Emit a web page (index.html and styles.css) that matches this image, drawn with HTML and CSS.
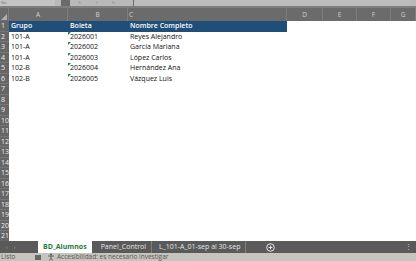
FILE: index.html
```html
<!DOCTYPE html>
<html lang="es">
<head>
    <meta charset="UTF-8">
    <meta name="viewport" content="width=device-width, initial-scale=1.0">
    <title>BD_Alumnos</title>
    <link rel="stylesheet" href="styles.css">
</head>
<body>
    <div class="formula-bar">
        <div class="name-box">Gü</div>
        <div class="fb-sep"></div>
        <div class="fb-icons"><span>✕</span><span>✓</span><span>fx</span></div>
        <div class="fb-input"></div>
    </div>

    <div class="sheet" id="sheet">
        <div class="row col-head">
            <div class="corner"></div>
            <div>A</div><div>B</div><div class="left">C</div><div>D</div><div>E</div><div>F</div><div>G</div>
        </div>
        <div class="row">
            <div class="rh">1</div>
            <div class="th">Grupo</div><div class="th">Boleta</div><div class="th">Nombre Completo</div>
            <div></div><div></div><div></div><div></div>
        </div>
        <div class="row">
            <div class="rh">2</div>
            <div>101-A</div><div class="txt">2026001</div><div>Reyes Alejandro</div>
            <div></div><div></div><div></div><div></div>
        </div>
        <div class="row">
            <div class="rh">3</div>
            <div>101-A</div><div class="txt">2026002</div><div>García Mariana</div>
            <div></div><div></div><div></div><div></div>
        </div>
        <div class="row">
            <div class="rh">4</div>
            <div>101-A</div><div class="txt">2026003</div><div>López Carlos</div>
            <div></div><div></div><div></div><div></div>
        </div>
        <div class="row">
            <div class="rh">5</div>
            <div>102-B</div><div class="txt">2026004</div><div>Hernández Ana</div>
            <div></div><div></div><div></div><div></div>
        </div>
        <div class="row">
            <div class="rh">6</div>
            <div>102-B</div><div class="txt">2026005</div><div>Vázquez Luis</div>
            <div></div><div></div><div></div><div></div>
        </div>
    </div>

    <div class="tabs">
        <div class="arrows"><span>‹</span><span>›</span></div>
        <div class="tab active">BD_Alumnos</div>
        <div class="tab">Panel_Control</div>
        <div class="tab">L_101-A_01-sep al 30-sep</div>
        <div class="add">
            <svg width="9" height="9" viewBox="0 0 9 9"><circle cx="4.5" cy="4.5" r="3.8" fill="none" stroke="#e6e6e6" stroke-width="1"/><path d="M4.5 2.6v3.8M2.6 4.5h3.8" stroke="#e6e6e6" stroke-width="1"/></svg>
        </div>
        <div class="more">⋮</div>
    </div>

    <div class="status">
        <span class="ready">Listo</span>
        <span class="st-icon"></span>
        <span class="access">
            <svg width="8" height="8" viewBox="0 0 8 8"><circle cx="4" cy="1.5" r="1" fill="#555"/><path d="M1 3h6M4 3v2.2M4 5.2l-1.6 2.3M4 5.2l1.6 2.3" stroke="#555" stroke-width="0.9" fill="none"/></svg>
            Accesibilidad: es necesario investigar
        </span>
    </div>

    <script>
        // empty rows 7 to 21
        const sheet = document.getElementById('sheet');
        for (let i = 7; i <= 21; i++) {
            const row = document.createElement('div');
            row.className = 'row';
            row.innerHTML = `<div class="rh">${i}</div>` + '<div></div>'.repeat(7);
            sheet.appendChild(row);
        }
    </script>
</body>
</html>
```

FILE: styles.css
```css
body {
    margin: 0;
    width: 416px;
    height: 261px;
    overflow: hidden;
    background: white;
    font-family: "Open Sans", "Liberation Sans", sans-serif;
    font-size: 7px;
    color: #111;
}
.formula-bar {
    display: flex;
    height: 6px;
    background: #b9b9b9;
    border-bottom: 2px solid #7e7e7e;
    overflow: hidden;
}
.name-box {
    width: 54px;
    font-size: 4px;
    line-height: 5px;
    color: #6a6a6a;
    padding-left: 1px;
    background: #c4c4c4;
}
.fb-sep {
    width: 9px;
    margin-left: 6px;
    background: #6a6a6a;
}
.fb-icons {
    display: flex;
    gap: 14px;
    width: 55px;
    padding-left: 8px;
    font-size: 4px;
    line-height: 5px;
    color: #8a8a8a;
}
.fb-input {
    flex: 1;
    border-left: 1px solid #6a6a6a;
    background: #bdbdbd;
    margin-right: 6px;
}
.sheet {
    display: flex;
    flex-direction: column;
}
.row {
    display: grid;
    grid-template-columns: 9px 59px 60px 159px 36px 34px 34px 1fr;
    height: 10.5px;
    line-height: 10.5px;
    white-space: nowrap;
}
.row > div {
    padding-left: 2px;
    overflow: hidden;
}
.col-head {
    height: 13px;
    line-height: 13px;
    background: #6b6b6b;
    color: #cfcfcf;
    font-size: 6.5px;
}
.col-head > div {
    text-align: center;
    padding-left: 0;
    border-right: 1px solid #7d7d7d;
}
.col-head .left {
    text-align: left;
    padding-left: 1px;
}
.corner {
    position: relative;
    background: #6b6b6b;
}
.corner::after {
    content: "";
    position: absolute;
    right: 1px;
    bottom: 1px;
    border-left: 6px solid transparent;
    border-bottom: 6px solid #b0b0b0;
}
.row > .rh {
    background: #666;
    color: #ececec;
    padding-left: 1px;
    font-size: 7px;
    border-bottom: 1px solid #777;
    box-sizing: border-box;
}
.th {
    background: #1f4e79;
    color: white;
    font-weight: 600;
}
.txt {
    position: relative;
}
.txt::before {
    content: "";
    position: absolute;
    left: 0;
    top: 0;
    border-top: 3px solid #1e8a3e;
    border-right: 3px solid transparent;
}
.tabs {
    position: absolute;
    top: 241px;
    left: 0;
    right: 0;
    height: 12px;
    display: flex;
    align-items: stretch;
    background: #5a5a5a;
    color: #e6e6e6;
    font-size: 7px;
    line-height: 12px;
}
.arrows {
    display: flex;
    gap: 6px;
    width: 38px;
    padding-left: 6px;
    box-sizing: border-box;
    color: #aaa;
    font-size: 6px;
}
.tab {
    padding: 0 5px;
    border-right: 1px solid #808080;
    margin-right: 2px;
}
.tab.active {
    background: white;
    color: #1e7a3e;
    font-weight: 700;
    border-right: none;
    margin-right: 4px;
}
.add {
    display: flex;
    align-items: center;
    margin-left: 18px;
}
.more {
    margin-left: auto;
    padding-right: 4px;
    color: #ccc;
}
.status {
    position: absolute;
    top: 253px;
    left: 0;
    right: 0;
    height: 8px;
    background: #c7c4c0;
    display: flex;
    align-items: center;
    font-size: 6.5px;
    color: #555;
    line-height: 8px;
    overflow: hidden;
}
.ready {
    width: 34px;
    padding-left: 1px;
}
.st-icon {
    width: 6px;
    height: 5px;
    background: #666;
    margin-right: 6px;
}
.access {
    display: flex;
    align-items: center;
    gap: 2px;
}
```
